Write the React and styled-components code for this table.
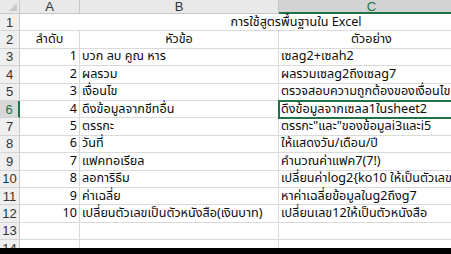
import React from "react";
import styled, { createGlobalStyle, css } from "styled-components";

const Global = createGlobalStyle`
  html, body { margin: 0; padding: 0; background: #000; }
  body { font-family: Tahoma, "Noto Sans Thai", "Noto Sans", "Liberation Sans", sans-serif; }
`;

const Screen = styled.div`
  width: 451px;
  height: 254px;
  overflow: hidden;
  background: #000;
`;

const Sheet = styled.div`
  height: 248px;
  overflow: hidden;
  background: #fff;
  display: grid;
  grid-template-columns: 20px 60px 199px 186px 108px;
  grid-template-rows: 14px;
  grid-auto-rows: 17.4px;
  font-size: 12.6px;
  color: #0d0d0d;
`;

const Corner = styled.div`
  box-sizing: border-box;
  background: #e9e9e9;
  border-right: 1px solid #c8c8c8;
  border-bottom: 1px solid #c8c8c8;
  position: relative;
  &::after {
    content: "";
    position: absolute;
    right: 2px;
    bottom: 2px;
    width: 0;
    height: 0;
    border-left: 8px solid transparent;
    border-bottom: 8px solid #c9c9c9;
  }
`;

const ColHeader = styled.div`
  box-sizing: border-box;
  background: ${(p) => (p.$selected ? "#d3d3d3" : "#e9e9e9")};
  color: ${(p) => (p.$selected ? "#217346" : "#333")};
  border-right: 1px solid #c8c8c8;
  border-bottom: ${(p) => (p.$selected ? "2px solid #217346" : "1px solid #c8c8c8")};
  display: flex;
  align-items: center;
  justify-content: center;
  font-family: "Liberation Sans", sans-serif;
  font-size: 13px;
`;

const RowHeader = styled.div`
  box-sizing: border-box;
  background: ${(p) => (p.$selected ? "#d8d8d8" : "#efefef")};
  color: ${(p) => (p.$selected ? "#217346" : "#333")};
  border-right: ${(p) => (p.$selected ? "2px solid #217346" : "1px solid #c8c8c8")};
  border-bottom: 1px solid #d4d4d4;
  display: flex;
  align-items: center;
  justify-content: center;
  font-family: "Liberation Sans", sans-serif;
  font-size: 13px;
`;

const Cell = styled.div`
  box-sizing: border-box;
  border-right: 1px solid #dadada;
  border-bottom: 1px solid #dadada;
  display: flex;
  align-items: center;
  padding: 0 2px;
  white-space: nowrap;
  min-width: 0;
  justify-content: ${(p) =>
    p.$align === "right" ? "flex-end" : p.$align === "center" ? "center" : "flex-start"};
  ${(p) =>
    p.$span &&
    css`
      grid-column: span ${p.$span};
    `}
  ${(p) =>
    p.$active &&
    css`
      outline: 2px solid #217346;
      outline-offset: -1px;
      position: relative;
      z-index: 1;
    `}
`;

const rows = [
  [1, "บวก ลบ คูณ หาร", "เซลg2+เซลh2"],
  [2, "ผลรวม", "ผลรวมเซลg2ถึงเซลg7"],
  [3, "เงื่อนไข", "ตรวจสอบความถูกต้องของเงื่อนไข"],
  [4, "ดึงข้อมูลจากชีทอื่น", "ดึงข้อมูลจากเซลa1ในsheet2"],
  [5, "ตรรกะ", "ตรรกะ\"และ\"ของข้อมูลi3และi5"],
  [6, "วันที่", "ให้แสดงวัน/เดือน/ปี"],
  [7, "แฟคทอเรียล", "คำนวณค่าแฟค7(7!)"],
  [8, "ลอการิธึม", "เปลี่ยนค่าlog2{ko10 ให้เป็นตัวเลข"],
  [9, "ค่าเฉลี่ย", "หาค่าเฉลี่ยข้อมูลในg2ถึงg7"],
  [10, "เปลี่ยนตัวเลขเป็นตัวหนังสือ(เงินบาท)", "เปลี่ยนเลข12ให้เป็นตัวหนังสือ"],
];

export default function App() {
  return (
    <Screen>
      <Global />
      <Sheet>
        <Corner />
        <ColHeader>A</ColHeader>
        <ColHeader>B</ColHeader>
        <ColHeader $selected>C</ColHeader>
        <ColHeader>D</ColHeader>

        <RowHeader>1</RowHeader>
        <Cell $span={4} $align="center">การใช้สูตรพื้นฐานใน Excel</Cell>

        <RowHeader>2</RowHeader>
        <Cell $align="center">ลำดับ</Cell>
        <Cell $align="center">หัวข้อ</Cell>
        <Cell $align="center">ตัวอย่าง</Cell>
        <Cell />

        {rows.map(([n, topic, example], i) => {
          const rowNo = i + 3;
          const active = rowNo === 6;
          return (
            <React.Fragment key={rowNo}>
              <RowHeader $selected={active}>{rowNo}</RowHeader>
              <Cell $align="right">{n}</Cell>
              <Cell>{topic}</Cell>
              <Cell $active={active}>{example}</Cell>
              <Cell />
            </React.Fragment>
          );
        })}

        {[13, 14, 15].map((r) => (
          <React.Fragment key={r}>
            <RowHeader>{r}</RowHeader>
            <Cell />
            <Cell />
            <Cell />
            <Cell />
          </React.Fragment>
        ))}
      </Sheet>
    </Screen>
  );
}
